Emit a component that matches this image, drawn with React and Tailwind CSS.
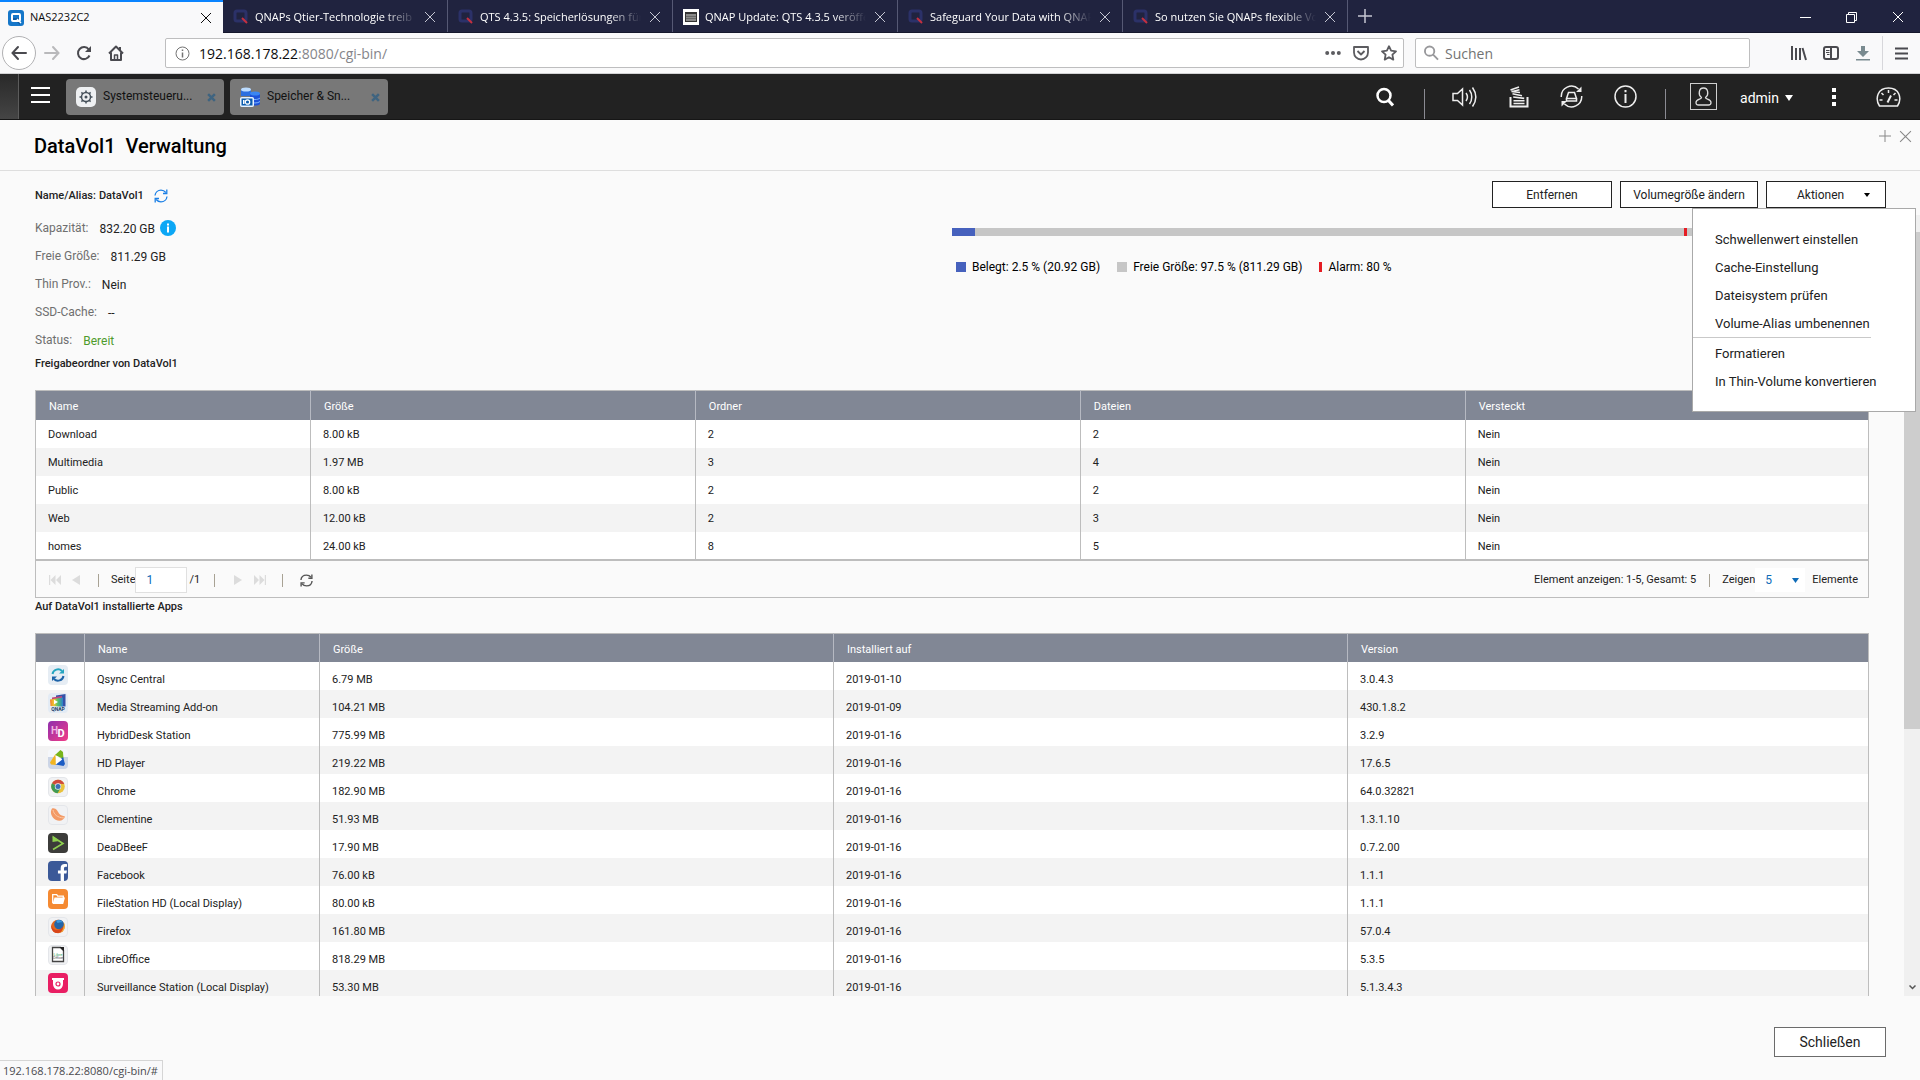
import { useState } from 'react';
import { FaFacebookF } from 'react-icons/fa';

const browserTabs = [
  { title: 'QNAPs Qtier-Technologie treib', icon: 'qnap' },
  { title: 'QTS 4.3.5: Speicherlösungen für', icon: 'qnap' },
  { title: 'QNAP Update: QTS 4.3.5 veröffe', icon: 'nas' },
  { title: 'Safeguard Your Data with QNAP', icon: 'qnap' },
  { title: 'So nutzen Sie QNAPs flexible Vo', icon: 'qnap' },
];

const folders = [
  ['Download', '8.00 kB', '2', '2', 'Nein'],
  ['Multimedia', '1.97 MB', '3', '4', 'Nein'],
  ['Public', '8.00 kB', '2', '2', 'Nein'],
  ['Web', '12.00 kB', '2', '3', 'Nein'],
  ['homes', '24.00 kB', '8', '5', 'Nein'],
];

const apps = [
  ['qsync', 'Qsync Central', '6.79 MB', '2019-01-10', '3.0.4.3'],
  ['media', 'Media Streaming Add-on', '104.21 MB', '2019-01-09', '430.1.8.2'],
  ['hybrid', 'HybridDesk Station', '775.99 MB', '2019-01-16', '3.2.9'],
  ['player', 'HD Player', '219.22 MB', '2019-01-16', '17.6.5'],
  ['chrome', 'Chrome', '182.90 MB', '2019-01-16', '64.0.32821'],
  ['clementine', 'Clementine', '51.93 MB', '2019-01-16', '1.3.1.10'],
  ['deadbeef', 'DeaDBeeF', '17.90 MB', '2019-01-16', '0.7.2.00'],
  ['facebook', 'Facebook', '76.00 kB', '2019-01-16', '1.1.1'],
  ['files', 'FileStation HD (Local Display)', '80.00 kB', '2019-01-16', '1.1.1'],
  ['firefox', 'Firefox', '161.80 MB', '2019-01-16', '57.0.4'],
  ['libre', 'LibreOffice', '818.29 MB', '2019-01-16', '5.3.5'],
  ['surveillance', 'Surveillance Station (Local Display)', '53.30 MB', '2019-01-16', '5.1.3.4.3'],
];

const details = [
  { label: 'Kapazität:', value: '832.20 GB', info: true },
  { label: 'Freie Größe:', value: '811.29 GB' },
  { label: 'Thin Prov.:', value: 'Nein' },
  { label: 'SSD-Cache:', value: '--' },
  { label: 'Status:', value: 'Bereit', ok: true },
];

const menuTop = ['Schwellenwert einstellen', 'Cache-Einstellung', 'Dateisystem prüfen', 'Volume-Alias umbenennen'];
const menuBottom = ['Formatieren', 'In Thin-Volume konvertieren'];

function CloseIcon({ className }) {
  return (
    <svg className={className} viewBox="0 0 12 12" fill="none" stroke="currentColor">
      <path d="M1 1l10 10M11 1L1 11" />
    </svg>
  );
}

function SyncIcon({ className, strokeWidth = 1.5 }) {
  return (
    <svg className={className} viewBox="0 0 14 14" fill="none" stroke="currentColor" strokeWidth={strokeWidth}>
      <path d="M1 6.5C1.3 3.3 3.9 1.2 7 1.2c2 0 3.6.8 4.8 2.3M13 7.5c-.3 3.2-2.9 5.3-6 5.3-2 0-3.6-.8-4.8-2.3" />
      <path d="M12.8.5v4H9M1.2 13.5v-4H5" />
    </svg>
  );
}

function TabIcon({ name }) {
  if (name === 'nas') {
    return (
      <svg className="h-4 w-4 shrink-0" viewBox="0 0 16 16">
        <path fill="#fff" d="M0 0h16v16H0z" />
        <path fill="#333" d="M2 3h12v10H2z" />
        <path fill="#8a8a8a" d="M3 5h10v7H3z" />
        <path stroke="#666" d="M3 7.500h10M3 9.500h10" />
      </svg>
    );
  }
  return (
    <svg className="h-4 w-4 shrink-0" viewBox="0 0 16 16" fill="none">
      <rect x="2" y="2" width="11" height="10" rx="2" stroke="#2b3168" strokeWidth="3" />
      <path d="M9 9l5 5" stroke="#c5303f" strokeWidth="2" />
    </svg>
  );
}

function BrowserTabs() {
  return (
    <div className="flex h-[33px] shrink-0 border-b border-[#15172c] bg-[#20233f] text-[11px] text-white">
      <div className="-mb-px flex w-[223px] items-center border-t-2 border-[#0a84ff] bg-[#f9f9fa] pr-[11px] pl-2 text-[#0c0c0d]">
        <svg className="h-4 w-4 shrink-0" viewBox="0 0 16 16" fill="none">
          <rect width="16" height="16" rx="3" fill="#1677c9" />
          <path d="M4 8h8v7l-4-4H4z" fill="#0f5ca5" />
          <rect x="4" y="4" width="8" height="7" rx="1" stroke="#fff" strokeWidth="2" />
          <path d="M9 9l4 4" stroke="#fff" strokeWidth="1.500" />
        </svg>
        <span className="ml-[6px] flex-1">NAS2232C2</span>
        <button aria-label="Tab schließen"><CloseIcon className="h-3 w-3" /></button>
      </div>
      {browserTabs.map((tab) => (
        <div key={tab.title} className="flex w-[225px] items-center border-r border-[#565974] pt-[2px] pr-[11px] pl-[10px]">
          <TabIcon name={tab.icon} />
          <span className="ml-[6px] flex-1 overflow-hidden whitespace-nowrap [mask-image:linear-gradient(to_right,black_80%,transparent)]">{tab.title}</span>
          <button aria-label="Tab schließen" className="ml-2 text-[#c5c6d2]"><CloseIcon className="h-3 w-3" /></button>
        </div>
      ))}
      <button aria-label="Neuer Tab" className="px-[10px]">
        <svg className="h-[14px] w-[14px]" viewBox="0 0 14 14" stroke="#c5c6d2" strokeWidth="1.500"><path d="M7 0v14M0 7h14" /></svg>
      </button>
      <div className="ml-auto flex items-center gap-[35px] pt-[2px] pr-4">
        <button aria-label="Minimieren"><svg className="h-[11px] w-[11px]" viewBox="0 0 11 11" stroke="#fff"><path d="M0 5.500h11" /></svg></button>
        <button aria-label="Verkleinern">
          <svg className="h-[11px] w-[11px]" viewBox="0 0 11 11" fill="none" stroke="#fff"><path d="M.5 2.500h8v8h-8zM2.500 2.500v-2h8v8h-2" /></svg>
        </button>
        <button aria-label="Schließen"><CloseIcon className="h-[12px] w-[12px]" /></button>
      </div>
    </div>
  );
}

function NavBar() {
  return (
    <div className="flex h-[41px] shrink-0 items-center border-b border-[#d2d2d4] bg-[#f9f9fa] pr-3 pl-[2px] text-[#4a4a4f]">
      <button aria-label="Zurück" className="flex h-[34px] w-[34px] items-center justify-center rounded-full border border-[#b1b1b3] bg-white">
        <svg className="h-4 w-4" viewBox="0 0 16 16" fill="none" stroke="currentColor" strokeWidth="2" strokeLinecap="round"><path d="M15 8H2M7 2L1.500 8 7 14" /></svg>
      </button>
      <button aria-label="Vor" className="ml-2 text-[#b9b9bb]">
        <svg className="h-4 w-4" viewBox="0 0 16 16" fill="none" stroke="currentColor" strokeWidth="2" strokeLinecap="round"><path d="M1 8h13M9 2l5.500 6L9 14" /></svg>
      </button>
      <button aria-label="Neu laden" className="ml-4">
        <svg className="h-4 w-4" viewBox="0 0 16 16" fill="none" stroke="currentColor" strokeWidth="2"><path d="M13.500 10.500A6 6 0 1 1 12.800 4.500" /><path d="M15 1v6H9z" fill="currentColor" stroke="none" /></svg>
      </button>
      <button aria-label="Startseite" className="ml-4">
        <svg className="h-4 w-4" viewBox="0 0 16 16" fill="none" stroke="currentColor" strokeWidth="2" strokeLinejoin="round"><path d="M1 8.500l7-7 7 7M3 7.500V15h10V7.500M12 2v3" /><path d="M6.500 15v-5h3v5" strokeWidth="1.500" /></svg>
      </button>
      <div className="ml-[41px] flex h-[30px] flex-1 items-center rounded-[2px] border border-[#bebebf] bg-white pr-[6px] pl-[9px]">
        <svg className="h-[15px] w-[15px]" viewBox="0 0 15 15" fill="none" stroke="#737373"><circle cx="7.500" cy="7.500" r="6.500" /><path strokeWidth="1.500" d="M7.500 6.500v5M7.500 3.500v1.500" /></svg>
        <div className="ml-[9px] flex-1 text-[14px] text-[#0c0c0d]">192.168.178.22<span className="text-[#85858a]">:8080/cgi-bin/</span></div>
        <div className="flex items-center gap-3">
          <button aria-label="Seitenaktionen"><svg className="h-4 w-4" viewBox="0 0 16 16" fill="#5c5c60"><circle cx="2.200" cy="8" r="2" /><circle cx="8" cy="8" r="2" /><circle cx="13.800" cy="8" r="2" /></svg></button>
          <button aria-label="Pocket"><svg className="h-4 w-4" viewBox="0 0 16 16" fill="none" stroke="#5c5c60" strokeWidth="1.800" strokeLinejoin="round"><path d="M1 2h14v5.500a7 7 0 0 1-14 0zM4.500 6L8 9.500 11.500 6" /></svg></button>
          <button aria-label="Lesezeichen"><svg className="h-4 w-4" viewBox="0 0 16 16" fill="none" stroke="#5c5c60" strokeWidth="1.800" strokeLinejoin="round"><path d="M8 1.200l2.100 4.500 4.900.6-3.600 3.400.9 4.900L8 12.200l-4.300 2.400.9-4.900L1 6.300l4.900-.6z" /></svg></button>
        </div>
      </div>
      <label className="ml-[11px] flex h-[30px] w-[335px] items-center rounded-[2px] border border-[#bebebf] bg-white pl-2">
        <svg className="h-4 w-4" viewBox="0 0 16 16" fill="none" stroke="#98989b" strokeWidth="2"><circle cx="6" cy="6" r="5" /><path d="M9.500 9.500L15 15" /></svg>
        <input type="text" aria-label="Suchen" placeholder="Suchen" className="ml-[6px] w-full text-[14px] outline-none placeholder:text-[#737373]" />
      </label>
      <div className="ml-[41px] flex items-center gap-4">
        <button aria-label="Bibliothek"><svg className="h-4 w-4" viewBox="0 0 16 16" fill="none" stroke="currentColor" strokeWidth="2"><path d="M1 1v14M5 3v12M9 3v12M11.500 3L15 15" /></svg></button>
        <button aria-label="Sidebar"><svg className="h-4 w-4" viewBox="0 0 16 16" fill="none" stroke="currentColor" strokeWidth="2"><rect x="1" y="2" width="14" height="12" rx="2" /><path d="M8 2v12" /><path strokeWidth="1" d="M3 5.500h3.500M3 7.500h3.500M4 9.500h2.500" /></svg></button>
        <button aria-label="Downloads"><svg className="h-4 w-4" viewBox="0 0 16 16" fill="#7a8b90"><path d="M6 1h4v5h4l-6 6-6-6h4zM1 14h14v1.500H1z" /></svg></button>
      </div>
      <div className="ml-[11px] h-[34px] w-px bg-[#d7d7db]" />
      <button aria-label="Menü" className="ml-3"><svg className="h-[13px] w-[13px]" viewBox="0 0 13 13" stroke="currentColor" strokeWidth="2"><path d="M0 1.500h13M0 6.500h13M0 11.500h13" /></svg></button>
    </div>
  );
}

function TaskButton({ label, children }) {
  return (
    <button className="flex h-9 w-[158px] items-center rounded-[4px] bg-[#787878] pr-2 pl-[10px] text-left text-[12px] text-[#111]">
      {children}
      <span className="ml-[7px] flex-1 pb-[2px]">{label}</span>
      <svg className="mt-[2px] h-[9px] w-[9px]" viewBox="0 0 8 8" stroke="#3f6480" strokeWidth="2.200"><path d="M1 1l6 6M7 1L1 7" /></svg>
    </button>
  );
}

function AppBar() {
  return (
    <div className="flex h-[46px] shrink-0 items-center border-b border-[#161616] bg-[#222] font-['Roboto',sans-serif] text-white">
      <div className="h-full w-[19px] border-r border-[#5c5c5c] bg-linear-to-b from-[#292929] to-[#454545]" />
      <button aria-label="Hauptmenü" className="ml-3 pb-1">
        <svg className="h-4 w-[19px]" viewBox="0 0 19 16" stroke="#fff" strokeWidth="2"><path d="M0 1h19M0 8h19M0 15h19" /></svg>
      </button>
      <div className="ml-4 flex gap-[6px]">
        <TaskButton label="Systemsteueru...">
          <svg className="h-5 w-5" viewBox="0 0 20 20" fill="none">
            <rect width="20" height="20" rx="5" fill="#eef0f2" />
            <circle cx="10" cy="10" r="4.500" stroke="#46505a" strokeWidth="1.500" />
            <circle cx="10" cy="10" r="1.500" fill="#46505a" />
            <path stroke="#46505a" strokeWidth="1.500" d="M10 3.500v2M10 14.500v2M3.500 10h2M14.500 10h2M5.400 5.400l1.400 1.400M13.200 13.200l1.400 1.400M5.400 14.600l1.400-1.400M13.200 6.800l1.400-1.400" />
          </svg>
        </TaskButton>
        <TaskButton label="Speicher & Sn...">
          <svg className="h-5 w-5" viewBox="0 0 20 20">
            <path fill="#2b6fe0" d="M1 2v7h10V2z" />
            <ellipse cx="6" cy="2.500" rx="5" ry="2" fill="#bcdcff" />
            <path fill="#1c52d8" d="M10 7v10c2 2 8 2 10 0V7z" />
            <ellipse cx="15" cy="6.500" rx="5" ry="2" fill="#3a86f3" />
            <path stroke="#7fb5ff" fill="none" d="M10 11c2 2 8 2 10 0M10 14.500c2 2 8 2 10 0" />
            <rect x=".75" y="10.750" width="12.500" height="8.500" rx="1" fill="#0b5cae" stroke="#e6f2ff" strokeWidth="1.500" />
            <circle cx="7.500" cy="15" r="2.200" fill="none" stroke="#fff" strokeWidth="1.300" />
            <path fill="#fff" d="M3 13h1.500v4H3z" />
          </svg>
        </TaskButton>
      </div>
      <div className="ml-auto flex h-full items-center">
        <button aria-label="Suchen">
          <svg className="h-5 w-[18px]" viewBox="0 0 18 20" fill="none" stroke="#fff"><circle cx="8" cy="8.500" r="6.500" strokeWidth="2.500" /><path strokeWidth="3" d="M12 13l5 5.500" /></svg>
        </button>
        <div className="ml-[30px] h-[30px] w-px self-end bg-[#8b8b93]" />
        <button aria-label="Lautstärke" className="ml-[27px]">
          <svg className="h-[22px] w-[25px]" viewBox="0 0 25 22" fill="none" stroke="#eee" strokeWidth="1.500"><path d="M1 7.500h4.500l5-4.500v16l-5-4.500H1zM14 7c1.800 2.500 1.800 5.500 0 8M17.500 4c3 4 3 10 0 14M20.500 1.500c4.200 6 4.200 13 0 19" /></svg>
        </button>
        <button aria-label="Hintergrundaufgaben" className="ml-[32px]">
          <svg className="h-[22px] w-5" viewBox="0 0 20 22" fill="none" stroke="#eee" strokeWidth="1.600"><path strokeWidth="2" d="M1.500 11v9.500h17V11" /><path d="M4.500 17.500h11M4.500 14.700h11M4.200 11l11 1.400M3.500 7.700l9.500 2.100M2.500 5.500l8.500 1M1.500 4L10 1M2.500 5.800l8-2" /></svg>
        </button>
        <button aria-label="Externe Geräte" className="ml-[31px]">
          <svg className="h-[23px] w-[23px]" viewBox="0 0 23 23" fill="none" stroke="#eee" strokeWidth="1.500">
            <path d="M1.300 12A10.200 10.200 0 0 1 18.500 4M21.700 11A10.200 10.200 0 0 1 4.500 19" />
            <path fill="#eee" stroke="none" d="M21.500 1.500v5.500h-5.500zM1.500 21.500V16H7z" />
            <path d="M8.500 7.500h6l2 6h-10zM6.500 13.500h10v2.500h-10z" />
          </svg>
        </button>
        <button aria-label="Benachrichtigungen" className="ml-[31px]">
          <svg className="h-[23px] w-[23px]" viewBox="0 0 23 23" fill="none" stroke="#eee" strokeWidth="1.500"><circle cx="11.500" cy="11.500" r="10.500" /><path strokeWidth="2" d="M11.500 9v9M11.500 5v2.200" /></svg>
        </button>
        <div className="ml-[28px] h-[30px] w-px self-end bg-[#8b8b93]" />
        <button aria-label="Benutzer" className="ml-6 flex h-[27px] w-[27px] items-center justify-center border border-[#cfcfcf]">
          <svg className="h-[19px] w-[17px]" viewBox="0 0 17 19" fill="none" stroke="#ddd" strokeWidth="1.300"><path d="M6.500 10.500C3 8 3.500 1 8.500 1s5.500 7 2 9.500c0 1.800 5.500 1.500 5.500 5 0 2-1 2.500-2.500 2.500h-10C2 18 1 17.500 1 15.500c0-3.500 5.500-3.200 5.500-5z" /></svg>
        </button>
        <button className="ml-[23px] flex items-center gap-[6px] pt-[3px] text-[14px]">
          admin
          <svg className="h-[6px] w-2" viewBox="0 0 8 6" fill="#fff"><path d="M0 0h8L4 6z" /></svg>
        </button>
        <button aria-label="Mehr" className="ml-[39px]">
          <svg className="h-[18px] w-1" viewBox="0 0 4 18" fill="#fff"><path d="M0 0h4v4H0zM0 7h4v4H0zM0 14h4v4H0z" /></svg>
        </button>
        <button aria-label="Dashboard" className="mr-[19px] ml-10">
          <svg className="h-5 w-[25px]" viewBox="0 0 25 20" fill="none" stroke="#eee" strokeWidth="1.500"><path d="M3.500 19C-1.500 11 2 1 12.500 1S26.500 11 21.500 19zM12.500 3v3M5.500 6l2 2M19.500 6l-2 2M3.500 13h3M18.500 13h3" /><path strokeWidth="2" d="M11.500 15.500l3.500-7" /></svg>
        </button>
      </div>
    </div>
  );
}

const lightTile = <rect x=".5" y=".5" width="19" height="19" rx="3.500" fill="#f1f2f4" stroke="#e4e6ea" />;

const appIcons = {
  qsync: (
    <>
      <rect width="20" height="20" rx="4" fill="#e6edf4" />
      <g fill="none" strokeWidth="2">
        <path stroke="#25a5c0" d="M4.500 9A5.600 5.600 0 0 1 14 6" />
        <path stroke="#1d63a8" d="M15.500 11A5.600 5.600 0 0 1 6 14" />
      </g>
      <path fill="#25a5c0" d="M16 4v4.500h-5z" />
      <path fill="#1d63a8" d="M4 16v-4.500h5z" />
    </>
  ),
  media: (
    <>
      <linearGradient id="media" x1="0" y1="0" x2="1" y2="0">
        <stop stopColor="#ef7a2c" />
        <stop offset=".3" stopColor="#f2c832" />
        <stop offset=".6" stopColor="#55c268" />
        <stop offset="1" stopColor="#2b7fd0" />
      </linearGradient>
      <rect width="20" height="20" rx="4" fill="#e3ebf4" />
      <path fill="#3552a8" d="M8 2.500L17.500 1v12.500L8 13z" />
      <path fill="#c0487c" d="M4 4.500L14 3v10H4z" />
      <path fill="url(#media)" d="M2 6.500L15 4.500v9L2.500 13z" />
      <path fill="#fff" d="M6 6.800l4 2.200-4 2.200z" />
      <text x="10" y="18" textAnchor="middle" fontSize="5" fontWeight="700" fill="#183a66">QNAP</text>
    </>
  ),
  hybrid: (
    <>
      <linearGradient id="hybrid" x1="0" y1="0" x2="1" y2="1"><stop stopColor="#8e2fae" /><stop offset="1" stopColor="#f23c86" /></linearGradient>
      <rect width="20" height="20" rx="4" fill="url(#hybrid)" />
      <text x="3" y="12.500" fontSize="10" fontWeight="700" fill="#f0b5e2">H</text>
      <text x="9.500" y="15.500" fontSize="11" fontWeight="700" fill="#fff">D</text>
    </>
  ),
  player: (
    <>
      <path fill="#f5f7fb" d="M4 0h12a4 4 0 0 1 4 4v4H0V4a4 4 0 0 1 4-4z" />
      <path fill="#ccd5e6" d="M0 8h20v8a4 4 0 0 1-4 4H4a4 4 0 0 1-4-4z" />
      <path fill="#78b51c" d="M7 6l5.500-5L15 3l.5 7z" />
      <path fill="#f2b521" d="M7.500 5L2 13.500l1 2 5 .5z" />
      <path fill="#1c5cc4" d="M15 8l2 7-1.500 2-8-1.500z" />
      <path fill="#fff" d="M7.800 6.500l6.500 4-6.500 5z" />
    </>
  ),
  chrome: (
    <>
      {lightTile}
      <circle cx="10" cy="9.500" r="6.800" fill="#e9c23c" />
      <path fill="#cf4a3c" d="M10 9.500L4 6.300a6.800 6.800 0 0 1 12.300.6L10 6.800z" />
      <path fill="#3f9a55" d="M4 6.300a6.800 6.800 0 0 0 5.600 10l2.800-5z" />
      <circle cx="10" cy="9.500" r="3.200" fill="#e8eef5" />
      <circle cx="10" cy="9.500" r="2.500" fill="#3b6fb5" />
    </>
  ),
  clementine: (
    <>
      {lightTile}
      <path fill="#f39a66" d="M4 3.500C8 2.500 9.500 6 11 8.500c1.500 2 4 2 6 3-.8 3.500-5 5.300-9 3.500C3.500 12.800 1.500 7 4 3.500z" />
      <path stroke="#fbc8a4" fill="none" d="M5 5c1 4.500 4 7.500 11 8" />
    </>
  ),
  deadbeef: (
    <>
      <rect width="20" height="20" rx="4" fill="#3c3c3a" />
      <path d="M5 4l10 6.500L5 16.500" fill="none" stroke="#8fd14f" strokeWidth="1.600" />
      <path fill="#8fd14f" d="M4.500 2.500L11 8l-6.500 1z" />
    </>
  ),
  facebook: (
    <>
      <rect width="20" height="20" rx="4" fill="#3b5998" />
      <FaFacebookF x="6" y="3" size={17} color="#fff" />
    </>
  ),
  files: (
    <>
      <rect width="20" height="20" rx="4" fill="#f58a32" />
      <path fill="none" stroke="#fff" strokeWidth="1.300" d="M4.700 14V5.700h4l1 1.500h5.600V9" />
      <path fill="#fff" d="M6.500 8.500H17L15.200 15H4.500z" />
    </>
  ),
  firefox: (
    <>
      {lightTile}
      <circle cx="10" cy="9.500" r="6.800" fill="#e56a1c" />
      <circle cx="11" cy="7.500" r="4.800" fill="#2566a8" />
      <path fill="#3f9be0" d="M8 3.500c3-1.500 6 0 6.500 2-1.500-.5-3 .5-5 .5z" />
      <path fill="#d8451a" d="M3.500 7c0 4 3 6.500 6.500 6 2.500-.5 4-2 4.500-4 1 5-3 7.500-6 7C4.500 15.500 2.500 11 3.500 7z" />
      <path fill="#f8b83c" d="M16 5.500c1.800 4 .5 8-3 10 2.500-3 3-6 3-10z" />
    </>
  ),
  libre: (
    <>
      {lightTile}
      <path fill="#fff" stroke="#444" strokeWidth="1.300" d="M4.500 2.500h8l3 3v11h-11z" />
      <path fill="#222" d="M11.500 2H16v4.500z" />
      <text x="10" y="10.500" textAnchor="middle" fontSize="4" fill="#3aa65b">Libre</text>
      <text x="10" y="14" textAnchor="middle" fontSize="4" fill="#555">Office</text>
    </>
  ),
  surveillance: (
    <>
      <rect width="20" height="20" rx="4" fill="#e91e63" />
      <path fill="#fff" d="M4 5h12v2h-1v4a5 5.500 0 0 1-10 0V7H4z" />
      <circle cx="10" cy="11" r="2" fill="#fff" stroke="#e91e63" strokeWidth="1.200" />
    </>
  ),
};

function AppIcon({ name }) {
  return <svg className="h-5 w-5" viewBox="0 0 20 20">{appIcons[name]}</svg>;
}

function FolderTable() {
  return (
    <table className="w-full table-fixed border-collapse border border-b-2 border-[#bdbdbd] bg-white text-left">
      <colgroup>
        <col className="w-[15%]" />
        <col className="w-[21%]" />
        <col className="w-[21%]" />
        <col className="w-[21%]" />
        <col className="w-[22%]" />
      </colgroup>
      <thead className="bg-[#818795] text-white">
        <tr className="h-[29px]">
          {['Name', 'Größe', 'Ordner', 'Dateien', 'Versteckt'].map((h) => (
            <th key={h} className="border-r border-[#b6b9c2] pt-1 pl-[13px] font-normal last:border-r-0">{h}</th>
          ))}
        </tr>
      </thead>
      <tbody>
        {folders.map((row) => (
          <tr key={row[0]} className="h-7 even:bg-[#f3f3f3]">
            {row.map((cell, i) => (
              <td key={i} className="border-r border-[#bdbdbd] pt-1 pl-3">{cell}</td>
            ))}
          </tr>
        ))}
      </tbody>
    </table>
  );
}

function AppTable() {
  return (
    <table className="w-full table-fixed border-collapse border border-[#bdbdbd] bg-white text-left">
      <colgroup>
        <col className="w-[49px]" />
        <col className="w-[235px]" />
        <col className="w-[514px]" />
        <col className="w-[514px]" />
        <col />
      </colgroup>
      <thead className="bg-[#818795] text-white">
        <tr className="h-[29px]">
          {['', 'Name', 'Größe', 'Installiert auf', 'Version'].map((h) => (
            <th key={h} className="border-r border-[#b6b9c2] pt-1 pl-[13px] font-normal last:border-r-0">{h}</th>
          ))}
        </tr>
      </thead>
      <tbody>
        {apps.map(([icon, ...row]) => (
          <tr key={icon} className="h-7 even:bg-[#f3f3f3]">
            <td className="border-r border-[#bdbdbd] pb-[2px] pl-3"><AppIcon name={icon} /></td>
            {row.map((cell, i) => (
              <td key={i} className="border-r border-[#bdbdbd] pt-2 pl-3">{cell}</td>
            ))}
          </tr>
        ))}
      </tbody>
    </table>
  );
}

function Pager() {
  const [page, setPage] = useState('1');

  return (
    <div className="flex h-[37px] items-center border border-t-0 border-[#bdbdbd] pt-[3px] pr-[10px] pl-[13px]">
      <button aria-label="Erste Seite"><svg className="h-[10px] w-3" viewBox="0 0 12 10" fill="#dcdcdc"><path d="M0 0h1.200v10H0zM6.500 0v10L1.500 5zM12 0v10L7 5z" /></svg></button>
      <button aria-label="Vorherige Seite" className="ml-[11px]"><svg className="h-[10px] w-2" viewBox="0 0 8 10" fill="#dcdcdc"><path d="M8 0v10L0 5z" /></svg></button>
      <div className="ml-[18px] h-[13px] w-px bg-[#a8a294]" />
      <label className="ml-3 flex items-center">
        Seite
        <input type="text" value={page} onChange={(e) => setPage(e.target.value)} className="h-[26px] w-[52px] border border-[#e0e0e0] bg-white pl-[10px] text-[12px] text-[#0f6cb8]" />
      </label>
      <span className="ml-[2px]">/1</span>
      <div className="ml-[14px] h-[13px] w-px bg-[#a8a294]" />
      <button aria-label="Nächste Seite" className="ml-[19px]"><svg className="h-[10px] w-2" viewBox="0 0 8 10" fill="#dcdcdc"><path d="M0 0v10l8-5z" /></svg></button>
      <button aria-label="Letzte Seite" className="ml-3"><svg className="h-[10px] w-3" viewBox="0 0 12 10" fill="#dcdcdc"><path d="M12 0h-1.200v10H12zM5.500 0v10l5-5zM0 0v10l5-5z" /></svg></button>
      <div className="ml-4 h-[13px] w-px bg-[#a8a294]" />
      <button aria-label="Aktualisieren" className="ml-[17px] text-[#555]"><SyncIcon className="h-[13px] w-[13px]" /></button>
      <span className="ml-auto">Element anzeigen: 1-5, Gesamt: 5</span>
      <div className="ml-[13px] h-[13px] w-px bg-[#a8a294]" />
      <label htmlFor="page-size" className="ml-3">Zeigen</label>
      <div className="flex h-6 w-[50px] items-center bg-white pr-[6px]">
        <select id="page-size" defaultValue="5" className="flex-1 appearance-none pl-[10px] text-[12px] text-[#0f6cb8]">
          <option>5</option>
          <option>10</option>
          <option>20</option>
        </select>
        <svg className="h-[5px] w-[7px]" viewBox="0 0 7 5" fill="#0f6cb8"><path d="M0 0h7L3.500 5z" /></svg>
      </div>
      <span className="ml-[7px]">Elemente</span>
    </div>
  );
}

function ActionMenu() {
  return (
    <ul className="absolute top-full -right-[30px] z-10 w-[224px] border border-[#a9a9a9] bg-white pt-4 pb-[17px] text-left text-[13px] text-[#222]">
      {menuTop.map((item) => (
        <li key={item}><button className="h-7 w-full pt-[2px] pl-[22px] text-left">{item}</button></li>
      ))}
      <li className="mr-11 h-px bg-[#c9c9c9]" />
      {menuBottom.map((item) => (
        <li key={item}><button className="h-7 w-full pt-1 pl-[22px] text-left">{item}</button></li>
      ))}
    </ul>
  );
}

function Usage() {
  return (
    <div className="w-1/2 pt-[13px]">
      <div className="flex h-2 bg-[#c6c6c6]">
        <div className="w-[2.5%] bg-[#4661bd]" />
        <div className="w-[77.3%]" />
        <div className="w-[3px] bg-[#e51c23]" />
      </div>
      <div className="mt-[22px] flex items-center pl-1 text-[12px] text-black">
        <span className="mr-[6px] h-[10px] w-[10px] bg-[#4661bd]" />
        Belegt: 2.5 % (20.92 GB)
        <span className="mr-[6px] ml-[17px] h-[10px] w-[10px] bg-[#c6c6c6]" />
        Freie Größe: 97.5 % (811.29 GB)
        <span className="mr-[6px] ml-[17px] h-[10px] w-[3px] bg-[#e51c23]" />
        Alarm: 80 %
      </div>
    </div>
  );
}

function VolumeDialog() {
  return (
    <main className="flex min-h-0 flex-1 flex-col bg-[#fafafa] font-['Roboto',sans-serif] text-[11px] text-[#222]">
      <header className="flex h-[51px] shrink-0 border-b border-[#dedede] pr-2 pl-[34px]">
        <h1 className="pt-[11px] text-[20px] leading-[30px] font-medium whitespace-pre text-black">DataVol1  Verwaltung</h1>
        <div className="mt-[10px] ml-auto flex items-start gap-2 text-[#888]">
          <button aria-label="Maximieren"><svg className="h-3 w-3" viewBox="0 0 12 12" stroke="currentColor"><path d="M6 0v12M0 6h12" /></svg></button>
          <button aria-label="Fenster schließen"><CloseIcon className="h-[13px] w-[13px]" /></button>
        </div>
      </header>

      <div className="flex h-11 shrink-0 items-start pr-[34px] pl-[35px]">
        <div className="flex h-[50px] items-center gap-[3px] font-medium">
          <span>Name/Alias:</span>
          <span>DataVol1</span>
          <button aria-label="Alias ändern" className="ml-[7px] text-[#1c80e6]"><SyncIcon className="h-[14px] w-[14px]" strokeWidth={1.3} /></button>
        </div>
        <div className="mt-[10px] ml-auto flex gap-2 text-[12px]">
          <button className="h-[27px] w-[120px] border border-[#222] bg-white pt-px">Entfernen</button>
          <button className="h-[27px] w-[138px] border border-[#222] bg-white pt-px">Volumegröße ändern</button>
          <div className="relative">
            <button className="flex h-[27px] w-[120px] items-center border border-[#222] bg-white pt-px pr-[15px] pl-[30px]">
              Aktionen
              <svg className="ml-auto h-1 w-[6px]" viewBox="0 0 6 4"><path d="M0 0h6L3 4z" /></svg>
            </button>
            <ActionMenu />
          </div>
        </div>
      </div>

      <div className="flex min-h-0 flex-1">
        <div className="min-w-0 flex-1 overflow-hidden pr-[35px] pl-[35px]">
          <div className="flex">
            <dl className="-mt-px w-1/2 text-[12px]">
              {details.map((d) => (
                <div key={d.label} className="flex h-7 items-center">
                  <dt className="text-[#6f6f6f]">{d.label}</dt>
                  <dd className={d.ok ? 'ml-[11px] pt-px text-[#4f9a2c]' : 'ml-[11px] pt-px'}>{d.value}</dd>
                  {d.info && (
                    <svg className="ml-[5px] h-4 w-4" viewBox="0 0 16 16"><circle cx="8" cy="8" r="8" fill="#0ca7f5" /><path stroke="#fff" strokeWidth="2" d="M8 6.500v6M8 3.500v2" /></svg>
                  )}
                </div>
              ))}
            </dl>
            <Usage />
          </div>
          <h2 className="h-9 pt-[2px] leading-4 font-medium">Freigabeordner von DataVol1</h2>
          <FolderTable />
          <Pager />
          <h2 className="h-[35px] pt-px leading-4 font-medium">Auf DataVol1 installierte Apps</h2>
          <AppTable />
        </div>
        <div className="flex w-4 shrink-0 flex-col items-center bg-[#f0f0f0]">
          <div className="mt-[17px] h-[497px] w-full bg-[#cdcdcd]" />
          <svg className="mt-auto mb-[6px] h-[5px] w-[7px]" viewBox="0 0 7 5" fill="none" stroke="#555" strokeWidth="1.500"><path d="M.5.5l3 3 3-3" /></svg>
        </div>
      </div>

      <footer className="flex h-[84px] shrink-0 items-start justify-end pt-[31px] pr-[34px]">
        <button className="h-[30px] w-[112px] border border-[#6b6b6b] bg-white pt-px text-[14px]">Schließen</button>
      </footer>
    </main>
  );
}

export default function App() {
  return (
    <div className="relative flex h-screen flex-col overflow-hidden font-['Open_Sans',sans-serif]">
      <BrowserTabs />
      <NavBar />
      <AppBar />
      <VolumeDialog />
      <div className="absolute bottom-0 left-0 flex h-5 items-center border-t border-r border-[#d5d5d5] bg-[#f9f9fa] pt-[2px] pr-1 pl-[3px] text-[11px] text-[#4a4a4f]">192.168.178.22:8080/cgi-bin/#</div>
    </div>
  );
}
